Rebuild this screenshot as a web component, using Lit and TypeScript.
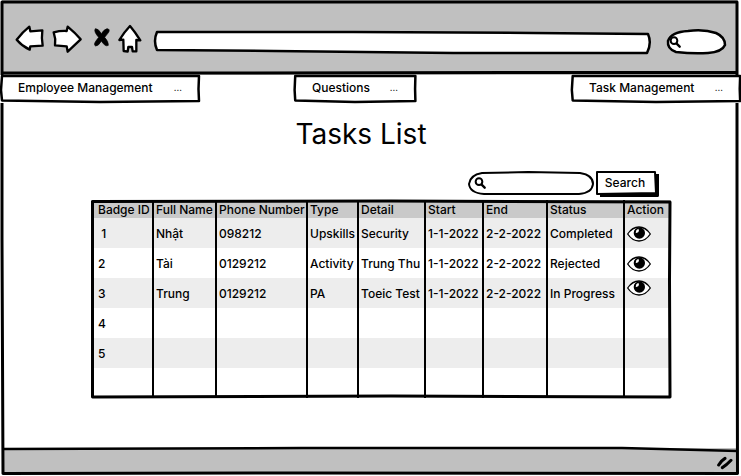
import { LitElement, html, css, svg, nothing } from "lit";
import { customElement, property } from "lit/decorators.js";

interface Task {
  id: string;
  name?: string;
  phone?: string;
  type?: string;
  detail?: string;
  start?: string;
  end?: string;
  status?: string;
  raised?: boolean;
}

const COLUMNS = [
  { key: "id", label: "Badge ID" },
  { key: "name", label: "Full Name" },
  { key: "phone", label: "Phone Number" },
  { key: "type", label: "Type" },
  { key: "detail", label: "Detail" },
  { key: "start", label: "Start" },
  { key: "end", label: "End" },
  { key: "status", label: "Status" },
] as const;

const TASKS: Task[] = [
  { id: "\u00a01", name: "Nhật", phone: "098212", type: "Upskills", detail: "Security", start: "1-1-2022", end: "2-2-2022", status: "Completed" },
  { id: "2", name: "Tài", phone: "0129212", type: "Activity", detail: "Trung Thu", start: "1-1-2022", end: "2-2-2022", status: "Rejected" },
  { id: "3", name: "Trung", phone: "0129212", type: "PA", detail: "Toeic Test", start: "1-1-2022", end: "2-2-2022", status: "In Progress", raised: true },
  { id: "4" },
  { id: "5" },
  { id: "" },
];

/** A hand-drawn outline stretched over its container. */
const ink = (w: number, h: number, shape: unknown) => html`
  <svg class="ink" viewBox="0 0 ${w} ${h}" preserveAspectRatio="none" aria-hidden="true">${shape}</svg>
`;

const magnifier = html`
  <svg class="magnifier" viewBox="0 0 36 36" aria-hidden="true">
    <circle cx="15" cy="14" r="10" fill="none" stroke="#000" stroke-width="6" />
    <path d="M23 23 L32 32" stroke="#000" stroke-width="7" stroke-linecap="round" />
  </svg>
`;

const base = css`
  * { box-sizing: border-box; }
  button, input, select {
    font: inherit;
    color: inherit;
    border: 0;
    margin: 0;
    padding: 0;
    background: none;
    appearance: none;
    border-radius: 0;
  }
  svg { display: block; }
  .ink {
    position: absolute;
    inset: 0;
    width: 100%;
    height: 100%;
    overflow: visible;
    pointer-events: none;
  }
  .ink path { vector-effect: non-scaling-stroke; stroke: #000; fill: none; stroke-linejoin: round; }
  .ink .paper { fill: #fff; }
  .magnifier { width: 12px; height: 12px; }
`;

@customElement("browser-bar")
export class BrowserBar extends LitElement {
  static styles = [base, css`
    :host {
      display: flex;
      align-items: center;
      position: relative;
      height: 75px;
      padding: 0 12px 0 13px;
      background: #c0c0c0;
    }
    .tools { display: flex; gap: 8px; margin-right: 12px; }
    .tools button { display: block; cursor: pointer; }
    .tools svg { height: 28px; overflow: visible; }
    .tools path { stroke: #000; stroke-width: 7; stroke-linejoin: round; fill: #fff; }
    .tools .blot { fill: #000; stroke-width: 2; }
    .back { width: 29px; }
    .forward { width: 30px; }
    .stop { width: 20px; }
    .home { width: 24px; }
    .field { position: relative; display: flex; align-items: center; height: 24px; }
    .field input { position: relative; width: 100%; height: 16px; padding: 0 8px; outline: none; }
    .address { flex: 1; margin-top: 8px; }
    .find { width: 60px; margin: 8px 0 0 15px; padding-left: 3px; }
    .find .magnifier { position: relative; flex: none; }
    .find input { padding: 0 4px; min-width: 0; }
  `];

  render() {
    return html`
      ${ink(741, 75, svg`<path d="M0 73 L240 73 L520 72.5 L741 72.5" stroke-width="3"/>`)}
      <div class="tools">
        <button aria-label="Back">
          <svg class="back" viewBox="45 66 87 84"><path d="M50 113 Q68 90 88 74 L91 88 L127 85 Q124 108 128 131 L91 133 L89 143 Q66 132 50 113Z"/></svg>
        </button>
        <button aria-label="Forward">
          <svg class="forward" viewBox="156 66 90 84"><path d="M161 91 Q180 86 200 87 L203 74 Q225 92 242 112 L203 149 L200 133 L165 130 Q168 110 161 91Z"/></svg>
        </button>
        <button aria-label="Stop">
          <svg class="stop" viewBox="270 66 60 84">
            <path class="blot" d="M286 80 Q295 79 304 95 Q312 82 321 80 Q331 81 326 91 L314 106 Q326 119 325 130 Q316 136 304 117 Q296 132 287 132 Q280 129 287 118 L296 106 Q280 88 286 80Z"/>
          </svg>
        </button>
        <button aria-label="Home">
          <svg class="home" viewBox="354 66 72 84"><path d="M358 114 Q372 91 390 72 Q406 91 421 115 L409 114 L409 148 L398 148 L396 135 L385 135 L383 149 L371 147 L370 113Z"/></svg>
        </button>
      </div>
      <div class="field address">
        ${ink(498, 24, svg`<path class="paper" stroke-width="2.5" d="M3 2 L200 2 L380 3 L495 4 Q499 13 494 23 L300 23 L120 21 L3 20 Q-1 11 3 2Z"/>`)}
        <input type="text" aria-label="Address" />
      </div>
      <div class="field find">
        ${ink(60, 24, svg`<path class="paper" stroke-width="2.5" d="M2 11 Q5 2 22 1 Q38 -1 50 3 Q59 7 59 15 Q56 22 42 23 Q27 24 10 22 Q1 19 2 11Z"/>`)}
        ${magnifier}
        <input type="text" aria-label="Web search" />
      </div>
    `;
  }
}

@customElement("menu-select")
export class MenuSelect extends LitElement {
  @property() label = "";

  static styles = [base, css`
    :host { display: block; position: relative; height: 28px; background: #fff; }
    select { position: relative; width: 100%; height: 26px; padding: 0 32px 0 18px; cursor: pointer; outline: none; }
    .dots { position: absolute; right: 18px; top: 4px; font-size: 9px; line-height: 18px; pointer-events: none; }
  `];

  render() {
    return html`
      ${ink(200, 28, svg`<path class="paper" stroke-width="2.5" d="M2 1 L60 1 L199 1 L198.5 14 L199 26 L100 27 L2 25.5 L1 15Z"/>`)}
      <select aria-label=${this.label}><option>${this.label}</option></select>
      <span class="dots" aria-hidden="true">...</span>
    `;
  }
}

@customElement("task-table")
export class TaskTable extends LitElement {
  @property({ attribute: false }) tasks: Task[] = [];

  static styles = [base, css`
    :host { display: block; position: relative; }
    table { width: 100%; table-layout: fixed; border-collapse: separate; border-spacing: 0; }
    .c0 { width: 61px; }
    .c1 { width: 63px; }
    .c2 { width: 91px; }
    .c3 { width: 51px; }
    .c4 { width: 67px; }
    .c5 { width: 58px; }
    .c6 { width: 64px; }
    .c7 { width: 77px; }
    .c8 { width: 48px; }
    th, td { padding: 0 0 0 2px; border-left: 2px solid #000; text-align: left; font-weight: inherit; white-space: nowrap; }
    th:first-child, td:first-child { border-left: 0; padding-left: 7px; }
    th { height: 18px; padding-top: 2px; line-height: 16px; background: #c9c9c9; }
    td { height: 30px; padding-top: 2px; line-height: 18px; }
    tbody tr:nth-child(odd) { background: #ededed; }
    .eye { display: block; cursor: pointer; }
    .eye svg { width: 24px; height: 16px; }
    .raised { vertical-align: top; }
  `];

  private eye(task: Task) {
    return html`
      <button class="eye" aria-label="View task ${task.id}">
        <svg viewBox="0 0 72 48">
          <path d="M2 24 Q16 3 36 3 Q56 3 70 24 Q56 45 36 45 Q16 45 2 24Z" fill="#fff" stroke="#000" stroke-width="4" stroke-linejoin="round" />
          <circle cx="37" cy="21" r="17" />
          <path d="M26 20 Q26 11 34 8 L36 14 Q35 20 28 21Z" fill="#fff" />
        </svg>
      </button>
    `;
  }

  render() {
    return html`
      <table>
        <colgroup>${[0, 1, 2, 3, 4, 5, 6, 7, 8].map((i) => html`<col class="c${i}" />`)}</colgroup>
        <thead>
          <tr>${COLUMNS.map((c) => html`<th scope="col">${c.label}</th>`)}<th scope="col">Action</th></tr>
        </thead>
        <tbody>
          ${this.tasks.map((t) => html`
            <tr>
              ${COLUMNS.map((c) => html`<td>${t[c.key] ?? nothing}</td>`)}
              <td class=${t.raised ? "raised" : ""}>${t.name ? this.eye(t) : nothing}</td>
            </tr>`)}
        </tbody>
      </table>
      ${ink(580, 198, svg`<path stroke-width="3" d="M1.5 1.5 L300 1 L579 2 L578.5 80 L579 197 L300 196 L1.5 197 L1.5 90Z"/>`)}
    `;
  }
}

@customElement("app-root")
export class AppRoot extends LitElement {
  static styles = [base, css`
    :host {
      display: flex;
      flex-direction: column;
      position: relative;
      min-height: 100vh;
      background: #fff;
      color: #000;
      font: 500 12px/18px Inter, "Noto Sans", sans-serif;
      box-sizing: border-box;
      padding: 0 3px 2px 2px;
    }
    nav { display: flex; position: relative; z-index: 1; margin: 0 -3px 0 -2px; }
    .employee { width: 200px; margin-right: 94px; }
    .questions { width: 122px; margin-right: auto; }
    .task { width: 170px; }
    main { flex: 1; display: flex; flex-direction: column; padding: 16px 67px 48px 89px; }
    h1 { margin: 0 40px 22px 0; font-size: 28px; line-height: 30px; font-weight: 400; text-align: center; }
    form { display: flex; align-self: flex-end; margin: 0 12px 3px 0; height: 26px; }
    .query { position: relative; display: flex; align-items: center; width: 127px; height: 24px; padding-left: 6px; }
    .query .magnifier { position: relative; flex: none; }
    .query input { position: relative; flex: 1; min-width: 0; height: 18px; padding: 0 8px 0 4px; outline: none; }
    .go { position: relative; width: 64px; height: 26px; padding: 0 4px 3px 0; cursor: pointer; }
    .go span { position: relative; }
    footer { position: relative; height: 26px; display: flex; justify-content: flex-end; align-items: center; padding: 4px 5px 0 0; background: #c0c0c0; }
    .grip { width: 16px; height: 14px; position: relative; }
  `];

  render() {
    return html`
      <browser-bar></browser-bar>
      <nav>
        <menu-select class="employee" label="Employee Management"></menu-select>
        <menu-select class="questions" label="Questions"></menu-select>
        <menu-select class="task" label="Task Management"></menu-select>
      </nav>
      <main>
        <h1>Tasks List</h1>
        <form @submit=${(e: Event) => e.preventDefault()}>
          <div class="query">
            ${ink(127, 24, svg`<path class="paper" stroke-width="2" d="M14 2 L60 1 L112 2 Q125 4 125 13 Q124 22 111 23 L16 23 Q2 22 1 13 Q2 4 14 2Z"/>`)}
            ${magnifier}
            <input type="text" aria-label="Search tasks" />
          </div>
          <button class="go" type="submit">
            ${ink(64, 26, svg`
              <path d="M5 24.5 L62.5 24.5 L62.5 3" stroke-width="3"/>
              <path class="paper" stroke-width="2" d="M2 1 L60 1 L61 22 L2 23Z"/>`)}
            <span>Search</span>
          </button>
        </form>
        <task-table .tasks=${TASKS}></task-table>
      </main>
      <footer>
        ${ink(736, 26, svg`<path d="M0 1 L300 0 L620 0 L736 3" stroke-width="2.5"/>`)}
        <svg class="grip" viewBox="0 0 48 42" aria-hidden="true">
          <path d="M5 27 Q12 14 24 7" stroke="#000" stroke-width="9" stroke-linecap="round" fill="none" />
          <path d="M16 35 Q28 28 42 13" stroke="#000" stroke-width="9" stroke-linecap="round" fill="none" />
        </svg>
      </footer>
      ${ink(741, 476, svg`<path d="M2 2 L737 2 L737 240 L737.5 473.5 L300 473 L3 473.5 L2 240Z" stroke-width="3"/>`)}
    `;
  }
}
